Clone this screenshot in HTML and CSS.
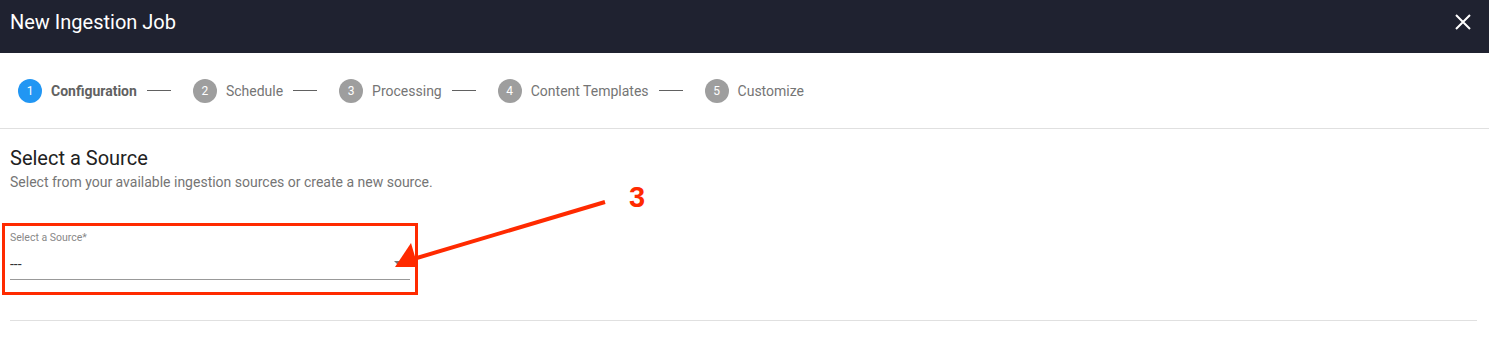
FILE: index.html
```html
<!DOCTYPE html>
<html lang="en">
<head>
  <meta charset="UTF-8" />
  <title>New Ingestion Job</title>
  <link rel="stylesheet" href="styles.css">
</head>
<body>
  <div class="header">
    <h1>New Ingestion Job</h1>
    <button class="close-button" title="Close">
      <svg width="16" height="16" viewBox="0 0 16 16"><path d="M1 1L15 15M15 1L1 15" stroke="#fff" stroke-width="2" fill="none"/></svg>
    </button>
  </div>

  <div class="stepper">
    <div class="step active"><span class="num">1</span><span class="label">Configuration</span><span class="dash"></span></div>
    <div class="step"><span class="num">2</span><span class="label">Schedule</span><span class="dash"></span></div>
    <div class="step"><span class="num">3</span><span class="label">Processing</span><span class="dash"></span></div>
    <div class="step"><span class="num">4</span><span class="label">Content Templates</span><span class="dash"></span></div>
    <div class="step"><span class="num">5</span><span class="label">Customize</span></div>
  </div>

  <div class="content">
    <h2>Select a Source</h2>
    <p class="subtitle">Select from your available ingestion sources or create a new source.</p>

    <div class="field">
      <label>Select a Source*</label>
      <div class="select">
        <span>---</span>
        <span class="caret"></span>
      </div>
      <div class="highlight"></div>
    </div>

    <hr class="divider">

    <svg class="callout" width="260" height="100" viewBox="0 0 260 100">
      <path d="M215 24L20 82" stroke="#ff2a00" stroke-width="4" fill="none"/>
      <path d="M5 89L21 65L28 89Z" fill="#ff2a00"/>
    </svg>
    <div class="callout-num">3</div>
  </div>
</body>
</html>
```

FILE: styles.css
```css
body {
  margin: 0;
  background: #fff;
  font-family: Roboto, "Liberation Sans", Arial, sans-serif;
  color: #222;
}

.header {
  display: flex;
  justify-content: space-between;
  align-items: center;
  height: 53px;
  padding: 0 10px;
  background: #1f2230;
  color: #fff;
}

.header h1 {
  margin: 0;
  font-size: 20px;
  font-weight: 400;
  padding-bottom: 10px;
}

.close-button {
  background: none;
  border: none;
  padding: 0;
  margin-right: 8px;
  margin-bottom: 10px;
  cursor: pointer;
  display: flex;
}

.stepper {
  display: flex;
  align-items: center;
  height: 75px;
  padding-left: 18px;
  border-bottom: 1px solid #e0e0e0;
}

.step {
  display: flex;
  align-items: center;
  margin-right: 22px;
  font-size: 14px;
  color: #757575;
}

.step .num {
  width: 24px;
  height: 24px;
  border-radius: 50%;
  background: #9e9e9e;
  color: #fff;
  font-size: 12px;
  display: flex;
  align-items: center;
  justify-content: center;
  margin-right: 9px;
}

.step.active .num {
  background: #2196f3;
}

.step.active .label {
  font-weight: 700;
  color: #616161;
}

.step .dash {
  width: 24px;
  height: 1px;
  background: #616161;
  margin-left: 10px;
}

.content {
  position: relative;
  padding: 17px 10px 0;
}

.content h2 {
  margin: 0;
  font-size: 20px;
  font-weight: 400;
  color: #212121;
  line-height: 24px;
}

.subtitle {
  margin: 4px 0 0;
  font-size: 14px;
  color: #757575;
}

.field {
  position: relative;
  width: 400px;
  margin-top: 42px;
}

.field label {
  display: block;
  font-size: 10.5px;
  color: #888;
  line-height: 12px;
}

.select {
  display: flex;
  justify-content: space-between;
  align-items: center;
  height: 30px;
  margin-top: 5px;
  font-size: 14px;
  color: #333;
  border-bottom: 1px solid #999;
}

.caret {
  width: 0;
  height: 0;
  border-left: 6px solid transparent;
  border-right: 6px solid transparent;
  border-top: 6px solid #757575;
  margin-right: 4px;
}

.highlight {
  position: absolute;
  left: -8px;
  top: -9px;
  width: 410px;
  height: 66px;
  border: 3px solid #ff2a00;
}

.divider {
  border: none;
  border-top: 1px solid #e0e0e0;
  margin: 40px 2px 0 0;
}

.callout {
  position: absolute;
  left: 390px;
  top: 49px;
}

.callout-num {
  position: absolute;
  left: 629px;
  top: 54px;
  font-family: "Liberation Sans", Arial, sans-serif;
  font-size: 29px;
  font-weight: 700;
  line-height: 29px;
  color: #ff2a00;
}
```
